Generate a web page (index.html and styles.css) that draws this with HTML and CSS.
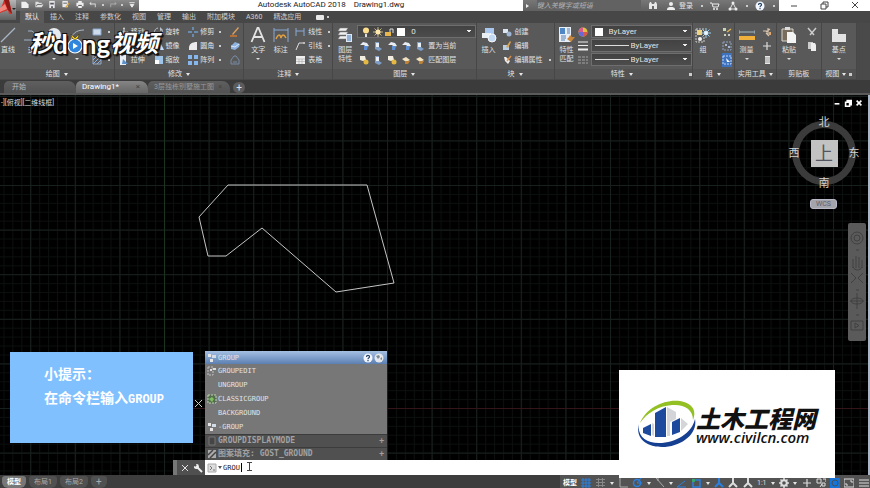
FILE: index.html
```html
<!DOCTYPE html>
<html lang="zh-CN">
<head>
    <meta charset="UTF-8">
    <meta name="viewport" content="width=device-width, initial-scale=1.0">
    <title>Autodesk AutoCAD 2018 Drawing1.dwg</title>
    <link rel="stylesheet" href="styles.css">
</head>
<body>
    <!-- icon set -->
    <svg class="defs" width="0" height="0" aria-hidden="true">
        <symbol id="i-new" viewBox="0 0 10 10"><path d="M1 2h5l3 3v4H1z" fill="#eee"/></symbol>
        <symbol id="i-open" viewBox="0 0 10 10"><path d="M1 2h3l1 1h3v2h2L8 8H1z" fill="#ddd"/><path d="M2 7l1-2h5" stroke="#666" fill="none"/></symbol>
        <symbol id="i-save" viewBox="0 0 10 10"><path d="M2 1h6v8H2z" fill="#e8e8e8"/><path d="M3 3h4v2H3zM4 7h2v2H4z" fill="#556"/></symbol>
        <symbol id="i-saveas" viewBox="0 0 10 10"><path d="M1 1h6v7H1z" fill="#e8e8e8"/><path d="M2 3h4v1H2z" fill="#556"/><path d="M4 8l4-5 1 1-4 5z" fill="#d9a23c"/></symbol>
        <symbol id="i-print" viewBox="0 0 10 10"><path d="M3 1h4v2H3zM1 3h8v4H1zM3 7h4v2H3z" fill="#eee"/><path d="M3 6h4" stroke="#444"/></symbol>
        <symbol id="i-undo" viewBox="0 0 10 10"><path d="M3 2L1 4l2 2V5h4v3h1V4H3z" fill="#ddd"/></symbol>
        <symbol id="i-redo" viewBox="0 0 10 10"><path d="M7 2l2 2-2 2V5H3v3H2V4h5z" fill="#aaa"/></symbol>
        <symbol id="i-bars" viewBox="0 0 10 10"><path d="M2 3h6M3 5l2 3 2-3z" stroke="#eee" fill="#eee"/></symbol>
        <symbol id="i-find" viewBox="0 0 10 10"><path d="M1 8V3l1-2h1l1 2h2l1-2h1l1 2v5H6V5H4v3z" fill="#e6e6e6"/></symbol>
        <symbol id="i-user" viewBox="0 0 10 10"><circle cx="5" cy="3" r="2" fill="#eee"/><path d="M1 9c0-3 2-3 4-3s4 0 4 3z" fill="#eee"/></symbol>
        <symbol id="i-cart" viewBox="0 0 10 10"><path d="M0 2h2l1 4h5l1-3H3" stroke="#eee" fill="none"/><circle cx="4" cy="8" r="1" fill="#eee"/><circle cx="7" cy="8" r="1" fill="#eee"/></symbol>
        <symbol id="i-net" viewBox="0 0 10 10"><path d="M5 2L2 8h6z" stroke="#ddd" fill="none"/><circle cx="5" cy="2" r="1.500" fill="#eee"/><circle cx="2" cy="8" r="1.500" fill="#eee"/><circle cx="8" cy="8" r="1.500" fill="#eee"/></symbol>
        <symbol id="i-help" viewBox="0 0 10 10"><circle cx="5" cy="5" r="4.500" fill="#f4f6ff"/><path d="M3.500 4c0-2 3-2 3-.3C6.500 5 5 4.800 5 6.200M5 7v1.200" stroke="#246" stroke-width="1.200" fill="none"/></symbol>
        <symbol id="i-globe" viewBox="0 0 10 10"><circle cx="5" cy="5" r="4.500" fill="#e4e8ec"/><path d="M2 3l3-1 1 2-2 2zM6 6l2-2v3z" fill="#7b8894"/></symbol>

        <symbol id="b-line" viewBox="0 0 16 16"><path d="M1 15L15 1" stroke="#a9b6c6" stroke-width="1.200"/></symbol>
        <symbol id="b-pline" viewBox="0 0 16 16"><path d="M1 13h8a5 5 0 0 0 0-9H5" stroke="#9fb4cc" fill="none"/></symbol>
        <symbol id="b-circle" viewBox="0 0 16 16"><circle cx="8" cy="8" r="7" fill="#e7ebef"/></symbol>
        <symbol id="b-arc" viewBox="0 0 16 16"><path d="M2 15C2 7 7 3 15 3" stroke="#a9b6c6" fill="none"/></symbol>
        <symbol id="b-text" viewBox="0 0 16 16"><path d="M1.500 15L7.500 1h1l6 14M4 10h8" stroke="#e4e4e4" stroke-width="1.800" fill="none"/></symbol>
        <symbol id="b-dim" viewBox="0 0 16 16"><path d="M1 1v14M15 1v14M1 3h14" stroke="#88a9d8"/><path d="M3 12c2-5 4-5 5-1 1-4 3-4 5 0" stroke="#e0a040" stroke-width="1.500" fill="none"/></symbol>
        <symbol id="b-layer" viewBox="0 0 16 16"><path d="M3 1h8L9 4H1zM3 5h8L9 8H1zM3 9h8l-2 3H1z" fill="#f0f0f0" stroke="#777" stroke-width=".500"/><path d="M9 7h6v8H9z" fill="#dfe9f5"/><path d="M10 9h4M10 11h4M10 13h4" stroke="#4479b5"/></symbol>
        <symbol id="b-insert" viewBox="0 0 16 16"><path d="M4 1h9v6H4z" fill="#a9c7ee"/><rect x="1" y="6" width="9" height="5" fill="#e9eef5"/><circle cx="11" cy="11" r="4" fill="#c3d8f1" stroke="#f5f8fc"/></symbol>
        <symbol id="b-match" viewBox="0 0 16 16"><path d="M0 0h12v15H0z" fill="#e8eef6"/><path d="M1 1h5v6H1z" fill="#4e86c6"/><path d="M8 2h3M8 4h3M8 6h3M2 9h5M2 11h5M2 13h4" stroke="#567fb2"/><path d="M8 12l2-2 1-2 2 2h3l-4 5z" fill="#c8863a"/></symbol>
        <symbol id="b-group" viewBox="0 0 16 16"><path d="M1 2h8M1 2v13h8v-5" stroke="#ccc" stroke-dasharray="2 1" fill="none"/><rect x="2" y="3" width="5" height="5" fill="#ebd584"/><circle cx="5" cy="12" r="2" fill="#f2f2f2"/><path d="M11 1v10M6 6h10M7.500 2.500l7 7M14.500 2.500l-7 7" stroke="#9cd0f0"/><circle cx="11" cy="6" r="2" fill="#eaf7ff"/></symbol>
        <symbol id="b-measure" viewBox="0 0 16 16"><path d="M0 5h16M0 3v4M16 3v4" stroke="#9fb9c4"/><path d="M0 9h16v4H0z" fill="#efb13b"/></symbol>
        <symbol id="b-paste" viewBox="0 0 16 16"><path d="M1 2h11v12H1z" fill="#776c5e" stroke="#d8d4ca"/><path d="M4 0h5v3H4z" fill="#ddd"/><path d="M6 5h6l3 3v8H6z" fill="#f3f3f3"/></symbol>
        <symbol id="b-base" viewBox="0 0 16 16"><path d="M1 2h6v5h8v8H1z" fill="#e3e3e3"/></symbol>

        <symbol id="s-move" viewBox="0 0 10 10"><path d="M5 1v8M1 5h8" stroke="#ddd"/><path d="M5 0l1 2H4zM5 10l1-2H4zM0 5l2-1v2zM10 5L8 4v2z" fill="#ddd"/></symbol>
        <symbol id="s-rotate" viewBox="0 0 10 10"><path d="M4 1a4 4 0 1 0 4 2" stroke="#b8c0c8" fill="none"/><path d="M6 0l3 3-3 1z" fill="#b8c0c8"/></symbol>
        <symbol id="s-trim" viewBox="0 0 10 10"><path d="M0 5h4M6 5h4M5 0v3M5 7v3" stroke="#6f9ccc" stroke-width="1.500"/></symbol>
        <symbol id="s-pencil" viewBox="0 0 10 10"><path d="M2 7l6-7 1 1-6 7z" fill="#dca060"/><path d="M0 9h7" stroke="#d07a30" stroke-width="1.500"/></symbol>
        <symbol id="s-copy" viewBox="0 0 10 10"><circle cx="3" cy="4" r="3" fill="#8fb4dc"/><circle cx="7" cy="6" r="3" fill="#dfe7f0"/></symbol>
        <symbol id="s-mirror" viewBox="0 0 10 10"><path d="M4 1v8H0z" fill="#8fa5bd"/><path d="M6 1v8h4z" fill="#c7e0ff"/></symbol>
        <symbol id="s-fillet" viewBox="0 0 10 10"><path d="M1 9V7c0-4 3-6 8-6v8z" fill="#ececec"/></symbol>
        <symbol id="s-explode" viewBox="0 0 10 10"><path d="M1 5l4-4 5 2-1 3-4 3-4-1z" fill="#8db2e0"/><path d="M1 5l4 1 4-3" stroke="#dce9f8" fill="none"/></symbol>
        <symbol id="s-stretch" viewBox="0 0 10 10"><path d="M1 0h6v10H1z" fill="#e9eff6"/><path d="M4 4l5 5H3z" fill="#5d92cc"/></symbol>
        <symbol id="s-scale" viewBox="0 0 10 10"><path d="M1 1h8v8H1z" fill="#9fc4ea"/><path d="M1 5h4v4H1z" fill="#fff"/></symbol>
        <symbol id="s-array" viewBox="0 0 10 10"><path d="M0 0h4v4H0zM6 0h4v4H6zM0 6h4v4H0zM6 6h4v4H6z" fill="#86b6ec"/></symbol>
        <symbol id="s-offset" viewBox="0 0 10 10"><path d="M1 9V5l3-4h2l3 4v4zM3 7h4" stroke="#7a8da6" fill="none"/></symbol>
        <symbol id="s-rect" viewBox="0 0 10 10"><path d="M1 2h8v6H1z" fill="#cfdaea" stroke="#8aa8cf"/></symbol>
        <symbol id="s-hatch" viewBox="0 0 10 10"><path d="M1 1h8v8H1z" stroke="#98acc5" fill="none"/><path d="M1 9l8-8M1 5l4-4M5 9l4-4" stroke="#8bb0e0"/></symbol>
        <symbol id="s-lin" viewBox="0 0 10 10"><path d="M1 1v8M9 1v8M1 4h8" stroke="#88a9d8"/></symbol>
        <symbol id="s-leader" viewBox="0 0 10 10"><path d="M1 9l3-7h4" stroke="#ddd" fill="none"/><circle cx="9" cy="2" r="1" fill="#ddd"/></symbol>
        <symbol id="s-table" viewBox="0 0 10 10"><path d="M1 1h9v8H1z" fill="#eee"/><path d="M1 4h9M1 6.500h9M4 4v5M7 4v5" stroke="#aaa" stroke-width=".600"/></symbol>
        <symbol id="s-bulb" viewBox="0 0 10 10"><circle cx="5" cy="3.500" r="3" fill="#ffdf8e"/><path d="M4 7h2v3H4z" fill="#ddd"/></symbol>
        <symbol id="s-sun" viewBox="0 0 10 10"><path d="M5 0v10M0 5h10M1.500 1.500l7 7M8.500 1.500l-7 7" stroke="#e3cf96" stroke-width=".800"/><circle cx="5" cy="5" r="2.500" fill="#ffe9ab"/></symbol>
        <symbol id="s-lock" viewBox="0 0 10 10"><path d="M0 5h6v4H0z" fill="#e8b64c"/><path d="M5 5V2h3v4" stroke="#ddd" fill="none"/></symbol>
        <symbol id="s-lay1" viewBox="0 0 10 10"><path d="M1 4l3-3 4 1 2 3-3 1-2-2z" fill="#e8edf3"/><path d="M5 5h4l-1 4H5z" fill="#5e8fd2"/></symbol>
        <symbol id="s-lay2" viewBox="0 0 10 10"><path d="M2 1h4v5l3 2-3 2-4-2z" fill="#7f9fc8"/><path d="M3 2h3v4H3z" fill="#e9eef5"/></symbol>
        <symbol id="s-lay3" viewBox="0 0 10 10"><path d="M1 1h5l1 4-3 1-3-1z" fill="#f1ede1"/><circle cx="7" cy="7" r="2.500" fill="#e5b843"/></symbol>
        <symbol id="s-lay4" viewBox="0 0 10 10"><path d="M1 4l4-2 4 3-4 2z" fill="#f1e3c0"/><path d="M4 6h5L7 9H4z" fill="#bd8236"/></symbol>
        <symbol id="s-create" viewBox="0 0 10 10"><path d="M1 2h5v4H1z" fill="#dce6f2"/><circle cx="7" cy="7" r="2.500" fill="#9eb6d3"/></symbol>
        <symbol id="s-edit" viewBox="0 0 10 10"><path d="M1 4h6v5H1z" fill="#b9cde6"/><path d="M4 6l4-6 1 1-3 6z" fill="#dfa34f"/></symbol>
        <symbol id="s-attr" viewBox="0 0 10 10"><path d="M2 2h2l4 4-2 3-3-3z" fill="#eee"/><path d="M5 6l4-5" stroke="#d9904a" stroke-width="1.500"/></symbol>
        <symbol id="s-wheel" viewBox="0 0 10 10"><circle cx="5" cy="5" r="4.500" fill="#e0c040"/><path d="M5 5V.500A4.500 4.500 0 0 0 .500 5z" fill="#d85a8c"/><path d="M5 5H.500A4.500 4.500 0 0 0 5 9.500z" fill="#6a69d8"/><path d="M5 5v4.500A4.500 4.500 0 0 0 9.500 5z" fill="#d7574b"/></symbol>
        <symbol id="s-lines" viewBox="0 0 10 10"><path d="M0 1h10M0 4.500h10" stroke="#eee"/><path d="M0 8.500h10" stroke="#eee" stroke-width="2"/></symbol>
        <symbol id="s-ltype" viewBox="0 0 10 10"><path d="M0 2h10M0 5h10M0 8h10" stroke="#8a8a8a" stroke-width="1.500" stroke-dasharray="3 1"/></symbol>
        <symbol id="s-dots" viewBox="0 0 10 10"><path d="M1 1h3v3H1zM2 7h2v2H2z" fill="#c9d4b3"/><path d="M5 5l4-3" stroke="#d9b255" stroke-width="1.500"/><path d="M6 7h2v2H6z" fill="#c9c9c9"/></symbol>
        <symbol id="s-grp" viewBox="0 0 10 10"><path d="M1 1h3v3H1zM3 6h3v3H3z" fill="#e6e6e6"/><path d="M5 2h4v3H5z" fill="#d3dbe6"/></symbol>
        <symbol id="s-dash" viewBox="0 0 10 10"><path d="M1 1h8v8H1z" stroke="#8da2c4" stroke-dasharray="2 1" fill="none"/><path d="M3 3h2v2H3zM6 5h2v2H6z" fill="#a3b7d0"/></symbol>
        <symbol id="s-gedit" viewBox="0 0 10 10"><path d="M1 1h5v8H1z" stroke="#c2c2c2" stroke-dasharray="2 1" fill="none"/><path d="M3 3h2v2H3zM6 2h3v2H6z" fill="#ddd"/></symbol>
        <symbol id="s-selgrp" viewBox="0 0 10 10"><path d="M1 1h8v8H1z" stroke="#bcd5ff" stroke-dasharray="2 1" fill="none"/><path d="M4 3l4 4H5z" fill="#fff"/></symbol>
        <symbol id="s-star" viewBox="0 0 10 10"><path d="M1 4h5M6 1v7M4 6l3 3M8 2L4 5" stroke="#d8c3ae" stroke-width="1.200"/><path d="M7 5h2v3H7z" fill="#e3a869"/></symbol>
        <symbol id="s-plus" viewBox="0 0 10 10"><path d="M5 1v8M1 5h8" stroke="#ddd" stroke-width="1.200"/></symbol>
        <symbol id="s-calc" viewBox="0 0 10 10"><path d="M3 1h5v8H3z" fill="#e8e8e8"/><path d="M3 3h5M3 5h5M3 7h5" stroke="#888" stroke-width=".800"/></symbol>
        <symbol id="s-cut" viewBox="0 0 10 10"><path d="M1 1l6 7M9 1L3 8" stroke="#ccc" stroke-width="1.500"/></symbol>
        <symbol id="s-pages" viewBox="0 0 10 10"><path d="M1 1h5v7H1z" fill="#ccc"/><path d="M4 2h4l1 2v6H4z" fill="#eee"/></symbol>

        <symbol id="t-grid" viewBox="0 0 10 10"><path d="M2 0v10M5 0v10M8 0v10M0 2h10M0 5h10M0 8h10" stroke="currentColor"/></symbol>
        <symbol id="t-snap" viewBox="0 0 10 10"><path d="M0 1.500h9M0 4.500h9M0 7.500h9M2.500 0v9M6.500 0v9" stroke="#888"/></symbol>
        <symbol id="t-ortho" viewBox="0 0 10 10"><path d="M2 0v9h8" stroke="#aaa" fill="none"/></symbol>
        <symbol id="t-polar" viewBox="0 0 10 10"><circle cx="5" cy="5" r="3.500" stroke="currentColor" stroke-width="1.500" fill="none"/><path d="M5 5h5M5 5l4-5" stroke="currentColor"/></symbol>
        <symbol id="t-iso" viewBox="0 0 10 10"><path d="M1 0l8 9M3 0v3" stroke="#aaa"/></symbol>
        <symbol id="t-track" viewBox="0 0 10 10"><path d="M0 9L8 3M0 9h9" stroke="currentColor"/></symbol>
        <symbol id="t-osnap" viewBox="0 0 10 10"><path d="M1 2h7v7H1z" stroke="currentColor" fill="none" stroke-width="1.500"/><path d="M0 1h3v3H0z" fill="#36a36b"/></symbol>
        <symbol id="t-man" viewBox="0 0 10 10"><path d="M5 0v5L1 9M5 5l4 4" stroke="currentColor" stroke-width="2" fill="none"/></symbol>
        <symbol id="t-gear" viewBox="0 0 10 10"><circle cx="5" cy="5" r="2.800" stroke="currentColor" stroke-width="2" fill="none"/><path d="M5 0v2M5 8v2M0 5h2M8 5h2M1.500 1.500l1.500 1.500M7 7l1.500 1.500M8.500 1.500L7 3M3 7L1.500 8.500" stroke="currentColor" stroke-width="1.500"/></symbol>
        <symbol id="t-units" viewBox="0 0 10 10"><path d="M1 1h4v4H1zM7 1h3v3M6 6l-2 3M6 5h3v3H6z" stroke="currentColor" fill="none"/></symbol>
        <symbol id="t-perf" viewBox="0 0 10 10"><path d="M0 0h10v10H0z" fill="#1673d8"/><circle cx="5" cy="5" r="3" stroke="#46505c" fill="none"/></symbol>
        <symbol id="t-full" viewBox="0 0 10 10"><path d="M0 1h10v8H0z" stroke="currentColor" fill="none"/><path d="M6 3h2v2M4 7H2V5" stroke="currentColor" fill="none"/></symbol>
        <symbol id="t-menu" viewBox="0 0 10 10"><path d="M0 2h10M0 5h10M0 8h10" stroke="currentColor" stroke-width="1.200"/></symbol>
        <symbol id="w-min" viewBox="0 0 10 10"><path d="M2 6h6" stroke="currentColor"/></symbol>
        <symbol id="w-max" viewBox="0 0 10 10"><path d="M2 4h5v5H2zM4 4V2h5v5H7" stroke="currentColor" fill="none"/></symbol>
        <symbol id="w-close" viewBox="0 0 10 10"><path d="M2 2l6 6M8 2L2 8" stroke="currentColor"/></symbol>
        <symbol id="w-wrench" viewBox="0 0 10 10"><path d="M3 3l6 6" stroke="#eee" stroke-width="2"/><path d="M1 3a2.500 2.500 0 1 0 2-2l1 2-1 1z" fill="#eee"/></symbol>
    </svg>

    <div class="app">
        <header class="header">
            <button class="app-btn" aria-label="A">
                <svg width="16" height="20" viewBox="0 0 16 20"><path d="M0 11L4 0h5l3 14H9L8 10 0 13z" fill="#d9352c"/><path d="M4 0l4 10 4 4L9 0z" fill="#8f1b17"/><path d="M0 8l5-4 2 5-7 3z" fill="#f08a80"/><path d="M12 8h4l-2 2z" fill="#222"/></svg>
            </button>
            <div class="header-main">
                <div class="titlebar">
                    <div class="quick">
                        <button aria-label="新建"><svg><use href="#i-new"/></svg></button>
                        <button aria-label="打开"><svg><use href="#i-open"/></svg></button>
                        <button aria-label="保存"><svg><use href="#i-save"/></svg></button>
                        <button aria-label="另存为"><svg><use href="#i-saveas"/></svg></button>
                        <button aria-label="打印"><svg><use href="#i-print"/></svg></button>
                        <button aria-label="放弃"><svg><use href="#i-undo"/></svg></button>
                        <span class="dot"></span>
                        <button aria-label="重做"><svg><use href="#i-redo"/></svg></button>
                        <span class="dot"></span>
                        <button aria-label="更多"><svg><use href="#i-bars"/></svg></button>
                    </div>
                    <div class="title"><span>Autodesk AutoCAD 2018</span><span>Drawing1.dwg</span></div>
                    <div class="info">
                        <span class="tri-right"></span>
                        <input class="search" type="text" aria-label="搜索" placeholder="键入关键字或短语">
                        <svg><use href="#i-find"/></svg>
                        <button class="login"><svg><use href="#i-user"/></svg>登录</button>
                        <span class="dot"></span>
                        <button aria-label="商店"><svg><use href="#i-cart"/></svg></button>
                        <button aria-label="连接"><svg><use href="#i-net"/></svg></button>
                        <span class="dot"></span>
                        <button aria-label="帮助"><svg><use href="#i-help"/></svg></button>
                        <span class="dot"></span>
                    </div>
                    <div class="win">
                        <button aria-label="最小化"><svg><use href="#w-min"/></svg></button>
                        <button aria-label="还原"><svg><use href="#w-max"/></svg></button>
                        <button aria-label="关闭"><svg><use href="#w-close"/></svg></button>
                    </div>
                </div>
                <nav class="menu">
                    <button class="active">默认</button>
                    <button>插入</button>
                    <button>注释</button>
                    <button>参数化</button>
                    <button>视图</button>
                    <button>管理</button>
                    <button>输出</button>
                    <button>附加模块</button>
                    <button>A360</button>
                    <button>精选应用</button>
                    <button class="menu-more" aria-label="最小化功能区"><span class="pill"></span><span class="dot"></span></button>
                </nav>
            </div>
        </header>

        <section class="ribbon">
            <div class="panel p-draw">
                <div class="body">
                    <button class="big"><svg><use href="#b-line"/></svg>直线</button>
                    <button class="big"><svg><use href="#b-pline"/></svg>多</button>
                    <button class="big drop blank" aria-label="圆"><svg><use href="#b-circle"/></svg></button>
                    <button class="big drop blank" aria-label="圆弧"><svg><use href="#b-arc"/></svg></button>
                    <div class="col">
                        <button class="small more" aria-label="矩形"><svg><use href="#s-rect"/></svg></button>
                        <button class="small more" aria-label="椭圆"><svg><use href="#s-copy"/></svg></button>
                        <button class="small more" aria-label="填充"><svg><use href="#s-hatch"/></svg></button>
                    </div>
                </div>
                <div class="name">绘图<i class="tri"></i></div>
            </div>
            <div class="panel p-modify">
                <div class="body">
                    <div class="col">
                        <button class="small"><svg><use href="#s-move"/></svg>移动</button>
                        <button class="small" aria-label="复制"><svg><use href="#s-copy"/></svg></button>
                        <button class="small"><svg><use href="#s-stretch"/></svg>拉伸</button>
                    </div>
                    <div class="col">
                        <button class="small"><svg><use href="#s-rotate"/></svg>旋转</button>
                        <button class="small"><svg><use href="#s-mirror"/></svg>镜像</button>
                        <button class="small"><svg><use href="#s-scale"/></svg>缩放</button>
                    </div>
                    <div class="col">
                        <button class="small more"><svg><use href="#s-trim"/></svg>修剪</button>
                        <button class="small more"><svg><use href="#s-fillet"/></svg>圆角</button>
                        <button class="small more"><svg><use href="#s-array"/></svg>阵列</button>
                    </div>
                    <div class="col">
                        <button class="small" aria-label="删除"><svg><use href="#s-pencil"/></svg></button>
                        <button class="small" aria-label="分解"><svg><use href="#s-explode"/></svg></button>
                        <button class="small" aria-label="偏移"><svg><use href="#s-offset"/></svg></button>
                    </div>
                </div>
                <div class="name">修改<i class="tri"></i></div>
            </div>
            <div class="panel p-note">
                <div class="body">
                    <button class="big drop"><svg><use href="#b-text"/></svg>文字</button>
                    <button class="big"><svg><use href="#b-dim"/></svg>标注</button>
                    <div class="col">
                        <button class="small more"><svg><use href="#s-lin"/></svg>线性</button>
                        <button class="small more"><svg><use href="#s-leader"/></svg>引线</button>
                        <button class="small"><svg><use href="#s-table"/></svg>表格</button>
                    </div>
                </div>
                <div class="name">注释<i class="tri"></i></div>
            </div>
            <div class="panel p-layer">
                <div class="body">
                    <button class="big"><svg><use href="#b-layer"/></svg>图层<br>特性</button>
                    <div class="col wide">
                        <div class="combo">
                            <svg><use href="#s-bulb"/></svg><svg><use href="#s-sun"/></svg><svg><use href="#s-lock"/></svg><span class="swatch"></span>
                            <select aria-label="图层"><option>0</option></select>
                        </div>
                        <div class="icons">
                            <svg><use href="#s-lay1"/></svg><svg><use href="#s-lay2"/></svg><svg><use href="#s-lay1"/></svg><svg><use href="#s-lay1"/></svg>
                            <button class="small"><svg><use href="#s-lay2"/></svg>置为当前</button>
                        </div>
                        <div class="icons">
                            <svg><use href="#s-lay3"/></svg><svg><use href="#s-lay2"/></svg><svg><use href="#s-lay3"/></svg><svg><use href="#s-lay4"/></svg>
                            <button class="small"><svg><use href="#s-lay4"/></svg>匹配图层</button>
                        </div>
                    </div>
                </div>
                <div class="name">图层<i class="tri"></i></div>
            </div>
            <div class="panel p-block">
                <div class="body">
                    <button class="big"><svg><use href="#b-insert"/></svg>插入</button>
                    <div class="col">
                        <button class="small"><svg><use href="#s-create"/></svg>创建</button>
                        <button class="small"><svg><use href="#s-edit"/></svg>编辑</button>
                        <button class="small more"><svg><use href="#s-attr"/></svg>编辑属性</button>
                    </div>
                </div>
                <div class="name">块<i class="tri"></i></div>
            </div>
            <div class="panel p-prop">
                <div class="body">
                    <button class="big"><svg><use href="#b-match"/></svg>特性<br>匹配</button>
                    <div class="col wide">
                        <div class="prop"><svg><use href="#s-wheel"/></svg><div class="combo"><span class="swatch"></span><select aria-label="颜色"><option>ByLayer</option></select></div></div>
                        <div class="prop"><svg><use href="#s-lines"/></svg><div class="combo"><span class="rule"></span><select aria-label="线宽"><option>ByLayer</option></select></div></div>
                        <div class="prop"><svg><use href="#s-ltype"/></svg><div class="combo"><span class="rule"></span><select aria-label="线型"><option>ByLayer</option></select></div></div>
                    </div>
                </div>
                <div class="name">特性<i class="tri"></i><i class="launch"></i></div>
            </div>
            <div class="panel p-group">
                <div class="body">
                    <button class="big"><svg><use href="#b-group"/></svg>组</button>
                    <div class="col">
                        <button class="small" aria-label="解除编组"><svg><use href="#s-dots"/></svg></button>
                        <button class="small" aria-label="组编辑"><svg><use href="#s-dash"/></svg></button>
                        <button class="small on" aria-label="启用组选择"><svg><use href="#s-selgrp"/></svg></button>
                    </div>
                </div>
                <div class="name">组<i class="tri"></i></div>
            </div>
            <div class="panel p-util">
                <div class="body">
                    <button class="big drop"><svg><use href="#b-measure"/></svg>测量</button>
                    <div class="col">
                        <button class="small" aria-label="快速选择"><svg><use href="#s-star"/></svg></button>
                        <button class="small" aria-label="点坐标"><svg><use href="#s-plus"/></svg></button>
                        <button class="small" aria-label="计算器"><svg><use href="#s-calc"/></svg></button>
                    </div>
                </div>
                <div class="name">实用工具<i class="tri"></i></div>
            </div>
            <div class="panel p-clip">
                <div class="body">
                    <button class="big drop"><svg><use href="#b-paste"/></svg>粘贴</button>
                    <div class="col">
                        <button class="small" aria-label="剪切"><svg><use href="#s-cut"/></svg></button>
                        <button class="small" aria-label="复制剪裁"><svg><use href="#s-pages"/></svg></button>
                    </div>
                </div>
                <div class="name">剪贴板</div>
            </div>
            <div class="panel p-view">
                <div class="body">
                    <button class="big drop"><svg><use href="#b-base"/></svg>基点</button>
                </div>
                <div class="name">视图<i class="tri"></i><i class="launch"></i></div>
            </div>
            <div class="ribbon-rest"></div>
        </section>

        <nav class="docs">
            <button class="doc">开始</button>
            <button class="doc active">Drawing1*<span>×</span></button>
            <button class="doc dim">3层独栋别墅施工图<span>×</span></button>
            <button class="add" aria-label="新图形">+</button>
        </nav>

        <main class="canvas">
            <svg class="drawing">
                <defs>
                    <pattern id="minor" x="164" y="90" width="8.920" height="8.920" patternUnits="userSpaceOnUse"><path d="M.500 0v9M0 .500h9" stroke="#0b0f0d" fill="none"/></pattern>
                    <pattern id="major" x="164" y="90" width="44.600" height="44.600" patternUnits="userSpaceOnUse"><path d="M.500 0v45M0 .500h45" stroke="#18201e" fill="none"/></pattern>
                </defs>
                <rect width="100%" height="100%" fill="url(#minor)"/>
                <rect width="100%" height="100%" fill="url(#major)"/>
                <path d="M164.500 0v313" stroke="#1a3420"/>
                <path d="M164 313.500h2000" stroke="#34161a"/>
                <path d="M228 90H367L394 188 336 197 262 133 226 161H208L199 122z" stroke="#c4c4c4" fill="none"/>
                <path d="M195 305l7 7M202 305l-7 7" stroke="#ccc"/>
            </svg>
            <div class="viewname">-][俯视][二维线框]</div>
            <div class="docwin">
                <button aria-label="最小化"><svg><use href="#w-min"/></svg></button>
                <button aria-label="还原"><svg><use href="#w-max"/></svg></button>
                <button aria-label="关闭"><svg><use href="#w-close"/></svg></button>
            </div>
            <div class="cube">
                <div class="ring"></div>
                <span class="north">北</span>
                <span class="west">西</span>
                <button class="face">上</button>
                <span class="east">东</span>
                <span class="south">南</span>
            </div>
            <button class="wcs">WCS</button>
            <div class="navbar">
                <svg viewBox="0 0 18 118"><g stroke="#404040" fill="none"><circle cx="9" cy="15" r="6"/><circle cx="9" cy="15" r="3"/><path d="M8 27h3M5 45V36M8 45V33M11 45V34M14 45V37M5 44c2 4 7 4 9 0M3 50l5 5M15 50l-5 5M3 60l5-5M15 60l-5-5M8 67h3M9 70v16M2 78h14M8 92h3M3 98h12v9H3zM7 100v5l4-2.500z"/><ellipse cx="9" cy="78" rx="6" ry="3"/></g></svg>
            </div>

            <div class="tip">
                <p>小提示：</p>
                <p>在命令栏输入<b>GROUP</b></p>
            </div>

            <div class="command">
                <ul class="suggest">
                    <li class="sel"><svg><use href="#s-grp"/></svg><button>GROUP</button><svg><use href="#i-help"/></svg><svg><use href="#i-globe"/></svg></li>
                    <li><svg><use href="#s-gedit"/></svg><button>GROUPEDIT</button></li>
                    <li><svg></svg><button>UNGROUP</button></li>
                    <li><svg viewBox="0 0 10 10"><path d="M1 1h8v8H1z" stroke="#b9d8ac" stroke-dasharray="2 1" fill="#566b4e"/><path d="M2 5l3-2 2 2-2 3z" fill="#7cc161"/></svg><button>CLASSICGROUP</button></li>
                    <li><svg></svg><button>BACKGROUND</button></li>
                    <li><svg><use href="#s-grp"/></svg><button>-GROUP</button></li>
                    <li class="cat"><svg viewBox="0 0 10 10"><path d="M2 1h6v8H2z" stroke="#777" fill="#454545"/></svg><button>GROUPDISPLAYMODE</button><em>+</em></li>
                    <li class="cat"><svg viewBox="0 0 10 10"><path d="M1 1h8v8H1z" fill="#aaa"/><path d="M1 6l5-5M3 9l6-6" stroke="#444" stroke-width="1.500"/></svg><button>图案填充: GOST_GROUND</button><em>+</em></li>
                </ul>
                <div class="cmdline">
                    <div class="grip">
                        <button aria-label="关闭"><svg><use href="#w-close"/></svg></button>
                        <button aria-label="自定义"><svg><use href="#w-wrench"/></svg></button>
                    </div>
                    <label class="entry">
                        <svg viewBox="0 0 10 10"><path d="M1 1h8v8H1z" fill="#ddd" stroke="#aaa"/><path d="M3 3l2 2-2 2M6 7h2" stroke="#777" fill="none"/></svg>
                        <i class="tri"></i>
                        <input type="text" value="GROU" size="4" aria-label="命令">
                        <span class="caret"></span>
                    </label>
                </div>
                <svg class="ibeam" viewBox="0 0 5 9"><path d="M0 .500h5M0 8.500h5M2.500 0v9" stroke="#444" fill="none"/></svg>
            </div>
        </main>

        <footer class="status">
            <button class="layout active">模型</button>
            <button class="layout">布局1</button>
            <button class="layout">布局2</button>
            <button class="layout plus">+</button>
            <div class="tools">
                <button class="model">模型</button>
                <svg class="blue"><use href="#t-grid"/></svg>
                <svg><use href="#t-snap"/></svg><i class="tri"></i>
                <svg><use href="#t-ortho"/></svg>
                <svg class="blue"><use href="#t-polar"/></svg><i class="tri"></i>
                <svg><use href="#t-iso"/></svg><i class="tri"></i>
                <svg class="blue"><use href="#t-track"/></svg>
                <svg class="blue"><use href="#t-osnap"/></svg><i class="tri"></i>
                <svg class="blue"><use href="#t-man"/></svg>
                <svg><use href="#t-man"/></svg>
                <svg><use href="#t-man"/></svg>
                <button>1:1</button><i class="tri"></i>
                <svg><use href="#t-gear"/></svg><i class="tri"></i>
                <svg><use href="#s-plus"/></svg>
                <svg><use href="#t-units"/></svg>
                <svg><use href="#t-perf"/></svg>
                <svg><use href="#t-full"/></svg>
                <svg><use href="#t-menu"/></svg>
            </div>
        </footer>

        <!-- watermarks over the window -->
        <div class="mark-video">
            <span>秒</span><span class="latin">d</span><svg viewBox="0 0 14 20"><circle cx="7" cy="12" r="7.500" fill="#fff"/><circle cx="7" cy="12" r="6.500" fill="#2f86dc"/><path d="M5 9l5 3-5 3z" fill="#fff"/><path d="M3 0l4 4 4-4-1 4-3 2-3-2z" fill="#ffd21f" stroke="#222" stroke-width=".500"/></svg><span class="latin">ng</span><span>视频</span>
        </div>
        <div class="mark-site">
            <svg viewBox="0 0 58 48">
                <path d="M2 23C8 8 26-1 42 1c12 2 17 9 13 19C55 9 46 4 34 5 20 6 9 13 2 23z" fill="#93c022"/>
                <path d="M1 24c-2 12 7 19 20 19 17 0 33-10 36-24 3 15-14 28-33 28C8 47-3 38 1 24z" fill="#153f91"/>
                <path d="M5 28l8-4v12l-8-3zM17 13l11-6v30H17zM34 22l8-4v14l-8 3z" fill="#1e4a9d"/>
                <path d="M29 7l9 5v7l-6 3v14h-3zM14 23l2 1v12l-2-1zM43 18l7 6-7 7z" fill="#d3d5d8"/>
            </svg>
            <div class="site-text">
                <strong>土木工程网</strong>
                <span>www.civilcn.com</span>
            </div>
        </div>
    </div>
</body>
</html>
```

FILE: styles.css
```css
* {
    box-sizing: border-box;
}

body {
    margin: 0;
    background-color: #000;
    color: #e2e2e2;
    font-family: Roboto, "Noto Sans CJK SC", sans-serif;
    font-size: 7px;
    line-height: 10px;
}

button, input, select {
    font: inherit;
    color: inherit;
    background: none;
    border: 0;
    padding: 0;
    margin: 0;
    outline: none;
}

button {
    cursor: pointer;
    white-space: nowrap;
}

svg {
    display: block;
    flex: none;
    width: 10px;
    height: 10px;
}

.defs {
    position: absolute;
    width: 0;
    height: 0;
}

.app {
    position: relative;
    display: flex;
    flex-direction: column;
    min-height: 100vh;
    overflow: hidden;
}

.tri {
    flex: none;
    border: 2px solid transparent;
    border-top: 3px solid #e6e6e6;
    border-bottom: 0;
}

.dot {
    flex: none;
    width: 2px;
    height: 2px;
    background-color: #ccc;
}

/* title bar and menu */
.header {
    display: flex;
    height: 23px;
    background-color: #474747;
}

.app-btn {
    width: 16px;
    height: 20px;
    background: linear-gradient(#b5b5b5, #5f5f5f);
}

.app-btn svg {
    width: 16px;
    height: 20px;
}

.header-main {
    flex: 1;
    min-width: 0;
}

.titlebar {
    display: flex;
    height: 11px;
    background-color: #fff;
}

.quick {
    flex: 0 0 123px;
    display: flex;
    align-items: center;
    justify-content: space-between;
    padding: 0 2px 2px 4px;
    background: linear-gradient(#8a8a8a, #606060);
}

.quick svg {
    height: 9px;
}

.title {
    flex: 1;
    display: flex;
    justify-content: center;
    gap: 8px;
    color: #222;
    font-size: 8px;
    white-space: nowrap;
}

.info {
    flex: 0 0 256px;
    display: flex;
    align-items: center;
    justify-content: space-between;
    padding-right: 4px;
    background: linear-gradient(#777, #606060);
}

.tri-right {
    margin-left: 3px;
    border: 2px solid transparent;
    border-left: 3px solid #eee;
    border-right: 0;
}

.search {
    width: 104px;
    height: 11px;
    background-color: #626262;
    font-style: italic;
}

.search::placeholder {
    color: #b4b4b4;
    opacity: 1;
}

.login {
    display: flex;
    gap: 3px;
}

.win {
    flex: 0 0 91px;
    display: flex;
    align-items: flex-start;
    justify-content: space-around;
    color: #444;
}

.menu {
    display: flex;
    align-items: stretch;
    gap: 1px;
    height: 12px;
    padding-left: 4px;
}

.menu button {
    padding: 0 5px;
    color: #cfcfcf;
}

.menu .active {
    background-color: #5b5b5b;
    color: #f2f2f2;
}

.menu .menu-more {
    display: flex;
    align-items: center;
    gap: 3px;
    margin-left: 4px;
}

.pill {
    width: 8px;
    height: 5px;
    border-radius: 1px;
    background-color: #e8e8e8;
}

/* ribbon */
.ribbon {
    display: flex;
    height: 57px;
    background-color: #4a4a4a;
}

.panel {
    display: flex;
    flex-direction: column;
    min-width: 0;
    background-color: #595959;
    border-right: 1px solid #474747;
}

.p-draw { flex: 115; }
.p-modify { flex: 130; }
.p-note { flex: 89; }
.p-layer { flex: 144; }
.p-block { flex: 78; }
.p-prop { flex: 139; }
.p-group { flex: 41; }
.p-util { flex: 42; }
.p-clip { flex: 44; }
.p-view { flex: 35; }
.ribbon-rest { flex: 13; }

.body {
    flex: 1;
    display: flex;
    justify-content: space-between;
    padding: 2px 4px 0;
}

.p-draw .body {
    padding-left: 0;
}

.p-modify .body,
.p-block .body {
    padding-right: 3px;
}

.p-note .body {
    padding: 2px 2px 0 6px;
}

.p-layer .body,
.p-prop .body {
    padding-right: 0;
}

.p-group .body {
    padding: 2px 2px 0;
}

.p-view .body {
    justify-content: center;
}

.big {
    display: flex;
    flex-direction: column;
    align-items: center;
    gap: 3px;
    width: 16px;
    padding-top: 2px;
    line-height: 9px;
}

.big svg {
    width: 16px;
    height: 16px;
}

.drop::after {
    content: "";
    border: 2px solid transparent;
    border-top-color: #ddd;
    border-bottom: 0;
}

.blank::after {
    margin-top: 12px;
}

.col {
    display: flex;
    flex-direction: column;
}

.col.wide {
    flex: 1;
    min-width: 0;
    padding-left: 4px;
}

.small {
    display: flex;
    align-items: center;
    gap: 3px;
    height: 14px;
}

.p-modify .small {
    gap: 2px;
}

.more::after {
    content: "";
    margin-left: 3px;
    border: 1px solid #ccc;
}

.on {
    background-color: #3f72bd;
}

.name {
    display: flex;
    align-items: center;
    justify-content: center;
    gap: 4px;
    height: 11px;
    border-bottom: 1px solid #484848;
    background-color: #525252;
    white-space: nowrap;
}

.p-view .name,
.p-util .name {
    gap: 3px;
}

.launch {
    width: 3px;
    height: 3px;
    background-color: #ccc;
}

.p-prop .name .launch {
    margin-left: 52px;
    margin-right: -56px;
}

.combo {
    flex: 1;
    display: flex;
    align-items: center;
    gap: 2px;
    min-width: 0;
    height: 13px;
    margin-bottom: 1px;
    padding: 0 3px;
    border: 1px solid #6e6e6e;
    background: linear-gradient(#424242, #4c4c4c);
}

.p-layer .combo {
    flex: none;
}

.combo select {
    flex: 1;
    min-width: 0;
    height: 11px;
    padding-left: 4px;
    appearance: none;
    font-size: 8px;
    background: linear-gradient(#eee, #eee) right 1px top 4px / 4px 1px no-repeat,
                linear-gradient(#eee, #eee) right 2px top 5px / 2px 1px no-repeat;
}

.swatch {
    width: 8px;
    height: 8px;
    background-color: #fff;
}

.rule {
    width: 34px;
    height: 1px;
    background-color: #ddd;
}

.combo .rule + select {
    padding-left: 0;
}

.icons {
    display: flex;
    align-items: center;
    gap: 4px;
    padding-left: 2px;
}

.prop {
    display: flex;
    align-items: center;
    gap: 3px;
    height: 14px;
}

.p-prop .col.wide {
    padding-left: 3px;
}

/* document tabs */
.docs {
    display: flex;
    align-items: flex-end;
    height: 15px;
    padding-left: 4px;
    border-bottom: 2px solid #5a5a5a;
    background-color: #3b3b3b;
}

.doc {
    display: flex;
    align-items: center;
    justify-content: space-between;
    min-width: 72px;
    height: 12px;
    padding: 0 8px;
    border-radius: 5px 8px 0 0;
    background: linear-gradient(#5f5f5f, #525252);
    color: #b9b9b9;
}

.doc.active {
    padding-left: 6px;
    background: linear-gradient(#858585, #666);
    color: #fff;
    font-size: 8px;
}

.doc.dim {
    gap: 4px;
    min-width: 82px;
    padding-left: 6px;
    color: #999;
}

.doc span {
    color: #444;
}

.add {
    width: 12px;
    height: 11px;
    margin-left: 3px;
    border-radius: 6px;
    background-color: #5c5c5c;
    font-size: 10px;
    line-height: 10px;
}

/* drawing area */
.canvas {
    position: relative;
    flex: 1;
    min-height: 370px;
    border-right: 2px solid #a9b7c6;
    background-color: #000;
}

.drawing {
    position: absolute;
    left: 0;
    top: 0;
    width: 100%;
    height: 100%;
}

.viewname {
    position: relative;
    padding: 3px 0 0 1px;
    color: #ddd;
}

.docwin {
    position: absolute;
    right: 5px;
    top: 4px;
    display: flex;
    gap: 3px;
    color: #fff;
}

.docwin svg {
    width: 8px;
    height: 8px;
    stroke-width: 2px;
}

.cube {
    position: absolute;
    right: 2px;
    top: 18px;
    display: grid;
    grid-template-columns: 24px 36px 24px;
    grid-template-rows: 20px 41px 20px;
    place-items: center;
    color: #d2d2d2;
    font-size: 11px;
    line-height: 16px;
}

.ring {
    position: absolute;
    left: 10px;
    top: 8px;
    width: 64px;
    height: 64px;
    border: 7px solid #3b3b3b;
    border-radius: 50%;
}

.cube span,
.face {
    position: relative;
}

.north, .south {
    grid-column: 2;
}

.west {
    grid-column: 1;
}

.face {
    width: 27px;
    height: 27px;
    background-color: #c2c2c2;
    color: #505560;
    font-size: 18px;
    line-height: 26px;
}

.wcs {
    position: absolute;
    right: 31px;
    top: 104px;
    width: 27px;
    height: 10px;
    border: 1px solid #b8b8c8;
    border-radius: 3px;
    background-color: #a3a3ac;
    color: #5f5f6a;
    line-height: 8px;
}

.navbar {
    position: absolute;
    right: 2px;
    top: 128px;
    border-radius: 2px;
    background-color: #5a5a5a;
}

.navbar svg {
    width: 18px;
    height: 118px;
}

.tip {
    position: absolute;
    left: 10px;
    bottom: 32px;
    width: 183px;
    height: 91px;
    padding: 10px 0 0 34px;
    background-color: #80c0ff;
    color: #fff;
    font-size: 14px;
    font-weight: bold;
    line-height: 24px;
}

.tip p {
    margin: 0;
}

.tip b {
    font-family: "Liberation Mono", monospace;
    font-size: 12px;
}

/* command line */
.command {
    position: absolute;
    left: 173px;
    right: 170px;
    bottom: 0;
}

.suggest {
    width: 182px;
    margin: 0 0 0 32px;
    padding: 0;
    list-style: none;
    background-color: #777;
    font-family: "DejaVu Sans Mono", "Noto Sans CJK SC", monospace;
}

.suggest li {
    display: flex;
    align-items: center;
    gap: 1px;
    height: 14px;
    padding: 0 3px 0 2px;
}

.suggest button {
    flex: 1;
    text-align: left;
}

.suggest .sel {
    height: 13px;
    background: linear-gradient(#a4bfe2, #5c80b3);
}

.suggest .cat {
    height: 13px;
    border-top: 1px solid #3c3c3c;
    background-color: #505050;
    color: #a2a2a2;
    font-size: 8px;
    font-weight: bold;
}

.suggest em {
    font-style: normal;
}

.cmdline {
    display: flex;
    height: 15px;
}

.grip {
    display: flex;
    align-items: center;
    justify-content: flex-end;
    gap: 3px;
    width: 32px;
    padding-right: 2px;
    border-left: 4px solid #777;
    background-color: #505050;
}

.entry {
    flex: 1;
    display: flex;
    align-items: center;
    gap: 1px;
    padding-left: 2px;
    background-color: #fff;
    color: #222;
}

.entry .tri {
    border-top-color: #555;
}

.entry input {
    width: 19px;
    font-family: "DejaVu Sans Mono", monospace;
}

.caret {
    width: 1px;
    height: 9px;
    margin-left: -2px;
    background-color: #000;
}

.ibeam {
    position: absolute;
    left: 74px;
    bottom: 4px;
    width: 5px;
    height: 9px;
}

/* status bar */
.status {
    display: flex;
    align-items: center;
    gap: 3px;
    height: 13px;
    padding-left: 2px;
    background-color: #3d3d3d;
}

.layout {
    height: 12px;
    padding: 0 5px;
    border-radius: 3px 3px 6px 6px;
    background-color: #505050;
    color: #aaa;
}

.layout.active {
    background-color: #777;
    color: #fff;
    font-weight: bold;
}

.layout.plus {
    font-size: 10px;
}

.tools {
    flex: none;
    display: flex;
    align-items: center;
    justify-content: space-between;
    width: 310px;
    height: 13px;
    margin-left: auto;
    padding: 3px 1px 0 3px;
    background-color: #535353;
    color: #ddd;
}

.model {
    color: #fff;
    font-weight: bold;
}

.blue {
    color: #2a80e0;
}

/* watermarks */
.mark-video {
    position: absolute;
    left: 29px;
    top: 32px;
    display: flex;
    align-items: center;
    color: #fff;
    font-size: 24px;
    font-style: italic;
    font-weight: bold;
    line-height: 24px;
    text-shadow: 1px 1px 0 #111, -1px 1px 0 #111, 1px -1px 0 #111, -1px -1px 0 #111, 2px 2px 1px #111;
}

.mark-video .latin {
    font-family: Lato, sans-serif;
    font-size: 26px;
    font-style: normal;
}

.mark-video svg {
    width: 14px;
    height: 20px;
}

.mark-site {
    position: absolute;
    right: 35px;
    bottom: 10px;
    display: flex;
    align-items: center;
    justify-content: center;
    width: 216px;
    height: 108px;
    background-color: #fff;
    color: #111;
}

.mark-site svg {
    width: 58px;
    height: 48px;
}

.site-text {
    display: flex;
    flex-direction: column;
    padding-top: 6px;
}

.site-text strong {
    font-size: 24px;
    font-style: italic;
    font-weight: 900;
    line-height: 20px;
}

.site-text span {
    font-family: "Open Sans", sans-serif;
    font-size: 15px;
    font-style: italic;
    font-weight: 600;
    line-height: 14px;
}
```
